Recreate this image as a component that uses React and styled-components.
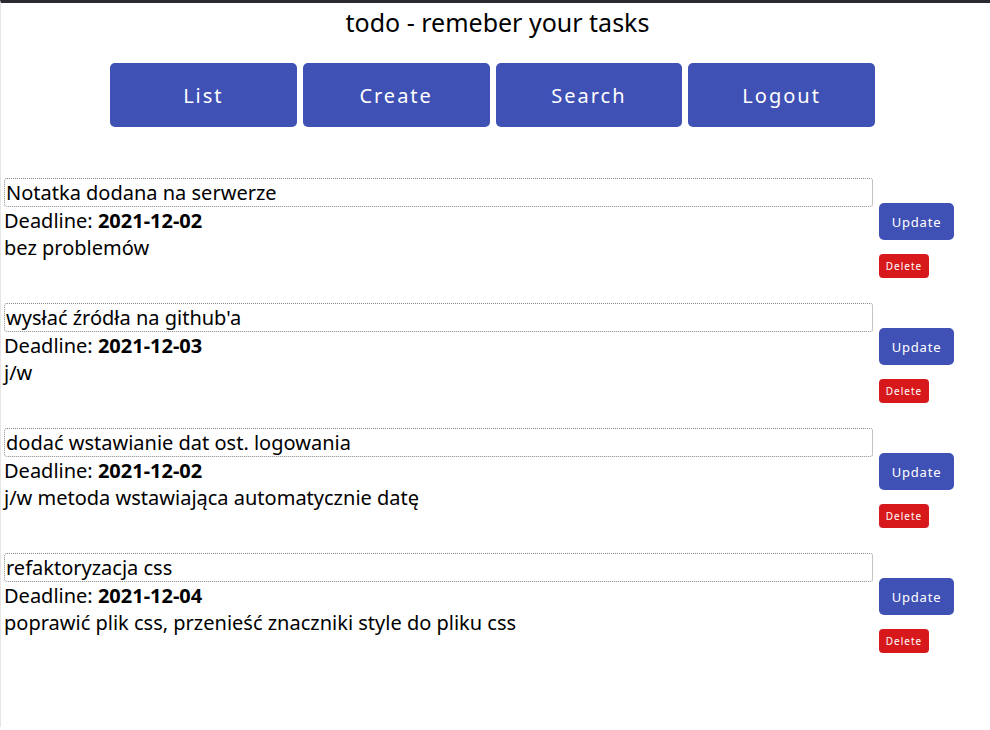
import React from "react";
import styled, { createGlobalStyle } from "styled-components";

const Global = createGlobalStyle`
  html, body { margin: 0; padding: 0; background: #ffffff; }
  body { font-family: "Noto Sans", "Open Sans", sans-serif; color: #000; }
`;

const Page = styled.div`
  min-height: 727px;
  border-top: 3px solid #2b2a33;
  border-left: 1px solid #e6e6e6;
  box-sizing: border-box;
  padding: 2px 0 0 3px;
`;

const Title = styled.h1`
  margin: 0;
  text-align: center;
  font-size: 25px;
  font-weight: 400;
  line-height: 34px;
  padding-left: 1px;
`;

const Nav = styled.nav`
  display: flex;
  gap: 6px;
  margin: 24px 0 0 106px;
  width: 765px;
`;

const NavButton = styled.button`
  flex: 1;
  height: 64px;
  border: none;
  border-radius: 5px;
  background: #3f51b5;
  color: #ffffff;
  font-family: "Noto Sans", sans-serif;
  font-size: 20px;
  letter-spacing: 2px;
  padding: 0;
  cursor: pointer;
`;

const List = styled.div`
  display: flex;
  flex-direction: column;
  margin-top: 51px;
`;

const Item = styled.div`
  display: flex;
  gap: 6px;
  height: 125px;
`;

const Body = styled.div`
  width: 869px;
  font-size: 20px;
  line-height: 27px;
`;

const NoteTitle = styled.div`
  border: 1px dotted #8a8a8a;
  border-radius: 3px;
  padding: 0 1px;
`;

const Line = styled.div``;

const Actions = styled.div`
  display: flex;
  flex-direction: column;
  align-items: flex-start;
  gap: 14px;
  padding-top: 25px;
`;

const ActionButton = styled.button`
  border: none;
  color: #ffffff;
  font-family: "Noto Sans", sans-serif;
  padding: 0;
  cursor: pointer;
  background: ${(p) => (p.$danger ? "#d7191c" : "#3f51b5")};
  width: ${(p) => (p.$danger ? "50px" : "75px")};
  height: ${(p) => (p.$danger ? "24px" : "37px")};
  border-radius: ${(p) => (p.$danger ? "4px" : "5px")};
  font-size: ${(p) => (p.$danger ? "10px" : "13px")};
  letter-spacing: ${(p) => (p.$danger ? "1px" : "0.8px")};
`;

const notes = [
  { title: "Notatka dodana na serwerze", deadline: "2021-12-02", desc: "bez problemów" },
  { title: "wysłać źródła na github'a", deadline: "2021-12-03", desc: "j/w" },
  { title: "dodać wstawianie dat ost. logowania", deadline: "2021-12-02", desc: "j/w metoda wstawiająca automatycznie datę" },
  { title: "refaktoryzacja css", deadline: "2021-12-04", desc: "poprawić plik css, przenieść znaczniki style do pliku css" },
];

export default function App() {
  return (
    <>
      <Global />
      <Page>
        <Title>todo - remeber your tasks</Title>
        <Nav>
          <NavButton>List</NavButton>
          <NavButton>Create</NavButton>
          <NavButton>Search</NavButton>
          <NavButton>Logout</NavButton>
        </Nav>
        <List>
          {notes.map((n, i) => (
            <Item key={i}>
              <Body>
                <NoteTitle>{n.title}</NoteTitle>
                <Line>
                  Deadline: <b>{n.deadline}</b>
                </Line>
                <Line>{n.desc}</Line>
              </Body>
              <Actions>
                <ActionButton>Update</ActionButton>
                <ActionButton $danger>Delete</ActionButton>
              </Actions>
            </Item>
          ))}
        </List>
      </Page>
    </>
  );
}
